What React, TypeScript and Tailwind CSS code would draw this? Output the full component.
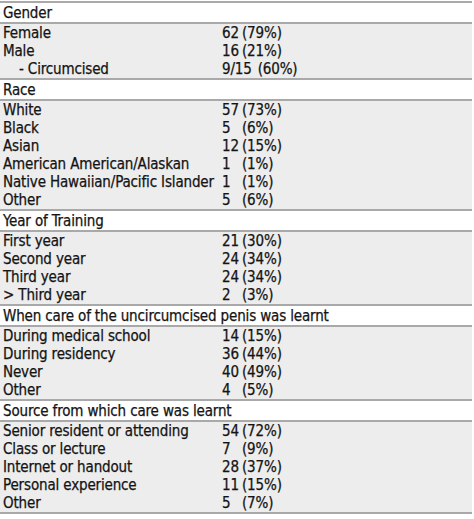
import React from "react";

type Row = { label: string; count: string; pct: string; indent?: boolean };
type Section = { title: string; rows: Row[] };

const sections: Section[] = [
  {
    title: "Gender",
    rows: [
      { label: "Female", count: "62", pct: "(79%)" },
      { label: "Male", count: "16", pct: "(21%)" },
      { label: "- Circumcised", count: "9/15", pct: "(60%)", indent: true },
    ],
  },
  {
    title: "Race",
    rows: [
      { label: "White", count: "57", pct: "(73%)" },
      { label: "Black", count: "5", pct: "(6%)" },
      { label: "Asian", count: "12", pct: "(15%)" },
      { label: "American American/Alaskan", count: "1", pct: "(1%)" },
      { label: "Native Hawaiian/Pacific Islander", count: "1", pct: "(1%)" },
      { label: "Other", count: "5", pct: "(6%)" },
    ],
  },
  {
    title: "Year of Training",
    rows: [
      { label: "First year", count: "21", pct: "(30%)" },
      { label: "Second year", count: "24", pct: "(34%)" },
      { label: "Third year", count: "24", pct: "(34%)" },
      { label: "> Third year", count: "2", pct: "(3%)" },
    ],
  },
  {
    title: "When care of the uncircumcised penis was learnt",
    rows: [
      { label: "During medical school", count: "14", pct: "(15%)" },
      { label: "During residency", count: "36", pct: "(44%)" },
      { label: "Never", count: "40", pct: "(49%)" },
      { label: "Other", count: "4", pct: "(5%)" },
    ],
  },
  {
    title: "Source from which care was learnt",
    rows: [
      { label: "Senior resident or attending", count: "54", pct: "(72%)" },
      { label: "Class or lecture", count: "7", pct: "(9%)" },
      { label: "Internet or handout", count: "28", pct: "(37%)" },
      { label: "Personal experience", count: "11", pct: "(15%)" },
      { label: "Other", count: "5", pct: "(7%)" },
    ],
  },
];

export default function App() {
  return (
    <div
      className="w-[474px] h-[519px] bg-white pt-[1px] text-[15px] tracking-[-0.15px] text-[#141414] [-webkit-text-stroke:0.25px_#141414]"
      style={{ fontFamily: '"DejaVu Sans Condensed", "DejaVu Sans", sans-serif' }}
    >
      <div className="w-[472px] border-t-2 border-[#a9a9a9]">
        {sections.map((s) => (
          <div key={s.title}>
            <div className="h-[21px] bg-white border-b-2 border-[#a9a9a9] pl-[3px] pt-[1px] leading-[18px]">
              {s.title}
            </div>
            <div className="bg-[#ededed] border-b-2 border-[#a9a9a9]">
              {s.rows.map((r) => (
                <div key={r.label} className="h-[18px] pt-[1px] leading-[17px] flex">
                  <div className={"w-[222px] whitespace-nowrap " + (r.indent ? "pl-[19px]" : "pl-[3px]")}>
                    {r.label}
                  </div>
                  <div className="flex whitespace-nowrap">
                    <span className={r.count.length > 2 ? "mr-[6px]" : "w-[20px]"}>{r.count}</span>
                    <span>{r.pct}</span>
                  </div>
                </div>
              ))}
            </div>
          </div>
        ))}
      </div>
    </div>
  );
}
